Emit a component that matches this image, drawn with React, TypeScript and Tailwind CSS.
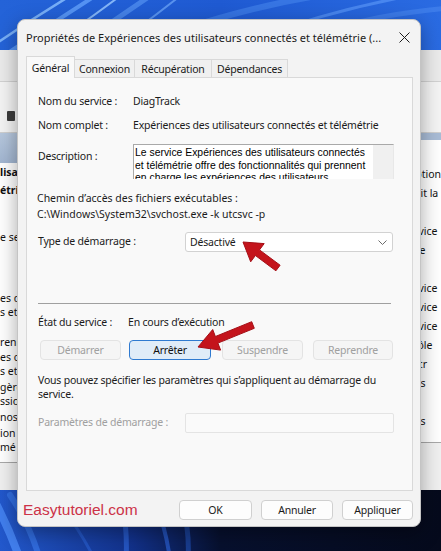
import React from 'react';

function Wallpaper() {
  return (
    <svg className="absolute inset-0" width="441" height="551" viewBox="0 0 441 551">
      <defs>
        <linearGradient id="topg" x1="0" y1="0" x2="1" y2="0">
          <stop offset="0" stopColor="#2463d8" />
          <stop offset="0.5" stopColor="#1f5ad2" />
          <stop offset="1" stopColor="#2a6be2" />
        </linearGradient>
        <linearGradient id="botg" x1="0" y1="0" x2="1" y2="0">
          <stop offset="0" stopColor="#2258cc" />
          <stop offset="0.3" stopColor="#12318a" />
          <stop offset="0.5" stopColor="#07102e" />
          <stop offset="1" stopColor="#050a1c" />
        </linearGradient>
      </defs>
      <rect x="0" y="0" width="441" height="70" fill="url(#topg)" />
      <rect x="0" y="470" width="441" height="81" fill="url(#botg)" />
      <g fill="none" strokeLinecap="round">
        <path d="M-10 48 Q30 20 70 -4" stroke="#8cc2ff" strokeWidth="2.5" opacity="0.8" />
        <path d="M5 55 Q45 28 95 -4" stroke="#6aa8ff" strokeWidth="4" opacity="0.7" />
        <path d="M30 58 Q75 30 120 -4" stroke="#9ccbff" strokeWidth="2" opacity="0.8" />
        <path d="M60 58 Q100 30 150 -4" stroke="#5e9bf5" strokeWidth="5" opacity="0.6" />
        <path d="M95 58 Q140 28 180 -4" stroke="#7fb6ff" strokeWidth="2" opacity="0.6" />
        <path d="M180 30 Q260 4 330 -6" stroke="#4c8bf0" strokeWidth="6" opacity="0.5" />
        <path d="M250 40 Q330 10 420 -6" stroke="#6aa6ff" strokeWidth="3" opacity="0.5" />
        <path d="M330 30 Q380 14 450 8" stroke="#4d8cf2" strokeWidth="5" opacity="0.5" />
        <path d="M-6 500 Q10 530 20 560" stroke="#4a88f5" strokeWidth="8" opacity="0.8" />
        <path d="M10 495 Q30 525 40 560" stroke="#3572e4" strokeWidth="6" opacity="0.8" />
        <path d="M120 495 Q128 525 126 560" stroke="#2c62d6" strokeWidth="5" opacity="0.7" />
        <path d="M150 495 Q165 520 170 560" stroke="#2a5ed0" strokeWidth="4" opacity="0.7" />
        <path d="M180 500 Q190 525 188 560" stroke="#1e4aa8" strokeWidth="5" opacity="0.7" />
        <path d="M60 505 Q80 530 95 560" stroke="#2a60d4" strokeWidth="3" opacity="0.6" />
      </g>
    </svg>
  );
}

function ServicesWindow() {
  const right = ['cription', 'urnit la', 'exe', 'service', 'ce le', 'ave', 'service', 'service', 'service', 'ntrôle', 'metr', 'e les', '', 'e les'];
  return (
    <div className="absolute left-0 top-[50px] w-[441px] h-[440px] bg-white flex flex-col font-['Noto_Sans',sans-serif] text-[10.5px] text-[#111]">
      <div className="h-[32px] bg-[#ebebeb] border-b border-[#d2d2d2]" />
      <div className="h-[51px] bg-[#f4f4f4] border-b border-[#cfcfcf] pl-[7px] pt-[29px]">
        <div className="w-[8px] h-[10px] rounded-[1px] bg-[#3c3c3c]" />
      </div>
      <div className="flex flex-1">
        <div className="w-[421px] flex flex-col">
          <div className="h-[30px] bg-gradient-to-b from-[#b7c8de] to-[#a2b6d1]" />
          <div className="flex-1 flex flex-col leading-[14px] whitespace-nowrap overflow-hidden">
            <div className="h-[14px] mt-[2px] font-bold">lisateurs</div>
            <div className="h-[14px] mt-[4px] font-bold">étrie</div>
            <div className="h-[14px] mt-[33px]">e service</div>
            <div className="h-[14px] mt-[47px]">es de</div>
            <div className="h-[14px]">s et</div>
            <div className="h-[14px] mt-[16px]">rennent</div>
            <div className="h-[14px] mt-[1px]">es con</div>
            <div className="h-[14px]">s et</div>
            <div className="h-[14px] mt-[2px]">gère</div>
            <div className="h-[14px]">ssion</div>
            <div className="h-[14px] mt-[2px]">nostic</div>
            <div className="h-[14px] mt-[2px]">ion</div>
            <div className="h-[14px]">mé</div>
          </div>
          <div className="h-[28px] bg-[#f0f0f0] border-t border-[#a8a8a8]" />
        </div>
        <div className="flex-1 flex flex-col">
          <div className="h-[7px] bg-[#a9bcd6]" />
          <div className="flex-1 flex flex-col pt-[25px] whitespace-nowrap overflow-hidden">
            {right.map((t, i) => (
              <div key={i} className="h-[19px] leading-[19px]">
                {t}
              </div>
            ))}
          </div>
          <div className="h-[48px] bg-[#f0f0f0] border-t border-[#a8a8a8]" />
        </div>
      </div>
    </div>
  );
}

function Arrows() {
  return (
    <svg className="absolute inset-0 pointer-events-none" width="441" height="551" viewBox="0 0 441 551">
      <g fill="#c4141c" stroke="#a50f16" strokeWidth="1" strokeLinejoin="round">
        <polygon points="280.1,265.2 259.5,249.9 264.2,243.6 243,242 250.7,261.8 255.4,255.5 275.9,270.8" />
        <polygon points="251.7,321.7 215.4,336.5 212.7,329.5 198,347 220.6,350.1 217.9,343.1 254.3,328.3" />
      </g>
    </svg>
  );
}

function Tab({ label, active, w }: { label: string; active?: boolean; w: string }) {
  return active ? (
    <div className={`${w} h-[22px] bg-[#f9f9f9] border border-b-0 border-[#d9d9d9] flex items-center justify-center -mb-px relative z-10`}>
      {label}
    </div>
  ) : (
    <div className={`${w} h-[18px] bg-[#f0f0f0] border-t border-r border-[#d9d9d9] flex items-center justify-center`}>
      {label}
    </div>
  );
}

function SmallButton({ label, w, disabled, focused }: { label: string; w: string; disabled?: boolean; focused?: boolean }) {
  let cls = 'bg-[#fdfdfd] border-[#d0d0d0] text-[#1b1b1b]';
  if (disabled) cls = 'bg-[#f5f5f5] border-[#e3e3e3] text-[#a0a0a0]';
  if (focused) cls = 'bg-[#e0ecf8] border-[#2f7ad0] text-[#111]';
  return (
    <div className={`${w} h-[20px] rounded-[4px] border ${cls} flex items-center justify-center`}>
      {label}
    </div>
  );
}

function Dialog() {
  return (
    <div className="absolute left-[17px] top-[19px] w-[404px] h-[508px] rounded-[8px] bg-[#f3f3f3] border border-[#c4c4c4] shadow-[0_6px_20px_rgba(0,0,0,0.35)] flex flex-col font-['Noto_Sans',sans-serif] text-[10.5px] tracking-[-0.2px] text-[#1b1b1b] leading-[16px]">
      <div className="h-[35px] flex items-center pl-[8px] pr-[10px]">
        <div className="text-[11px] tracking-normal whitespace-nowrap">
          Propriétés de Expériences des utilisateurs connectés et télémétrie (...
        </div>
        <svg width="11" height="11" viewBox="0 0 11 11" className="ml-auto">
          <path d="M0.5 0.5 L10.5 10.5 M10.5 0.5 L0.5 10.5" stroke="#1b1b1b" strokeWidth="1" />
        </svg>
      </div>
      <div className="flex items-end h-[22px] pl-[8px]">
        <Tab label="Général" active w="w-[49px]" />
        <Tab label="Connexion" w="w-[60px]" />
        <Tab label="Récupération" w="w-[77px]" />
        <Tab label="Dépendances" w="w-[76px]" />
      </div>
      <div className="ml-[8px] w-[387px] h-[414px] border border-[#d9d9d9] bg-[#f9f9f9] pt-[15px] pl-[11px] flex flex-col">
        <div className="flex h-[16px]">
          <div className="w-[95px]">Nom du service :</div>
          <div>DiagTrack</div>
        </div>
        <div className="flex h-[16px] mt-[8px]">
          <div className="w-[95px]">Nom complet :</div>
          <div>Expériences des utilisateurs connectés et télémétrie</div>
        </div>
        <div className="flex mt-[11px] h-[35px]">
          <div className="w-[95px] pt-[4px]">Description :</div>
          <div className="w-[261px] h-[35px] flex border-t border-l border-[#a9a9a9] border-r border-r-[#e8e8e8] bg-white overflow-hidden">
            <div className="flex-1 pl-[1px] pt-[2px] font-['Liberation_Sans',sans-serif] text-[10.4px] tracking-normal leading-[12.5px] text-black">
              Le service Expériences des utilisateurs connectés et télémétrie offre des fonctionnalités qui prennent en charge les expériences des utilisateurs
            </div>
            <div className="w-[20px] bg-[#f0f0f0]" />
          </div>
        </div>
        <div className="h-[16px] mt-[11px] -ml-px tracking-normal">Chemin d’accès des fichiers exécutables :</div>
        <div className="h-[16px] -ml-px tracking-normal">C:\Windows\System32\svchost.exe -k utcsvc -p</div>
        <div className="flex items-center mt-[10px] h-[20px]">
          <div className="w-[147px] -mt-[2px]">Type de démarrage :</div>
          <div className="w-[208px] h-[20px] bg-white border border-[#d2d2d2] rounded-[3px] flex items-center pl-[4px] pr-[5px]">
            <div className="flex-1">Désactivé</div>
            <svg width="9" height="5" viewBox="0 0 9 5">
              <path d="M0.5 0.5 L4.5 4.5 L8.5 0.5" stroke="#6b6b6b" strokeWidth="1" fill="none" />
            </svg>
          </div>
        </div>
        <div className="mt-[51px] w-[353px] h-px bg-[#a0a0a0]" />
        <div className="flex h-[16px] mt-[10px]">
          <div className="w-[90px]">État du service :</div>
          <div>En cours d’exécution</div>
        </div>
        <div className="flex mt-[10px] ml-[2px]">
          <SmallButton label="Démarrer" w="w-[81px]" disabled />
          <div className="ml-[8px]">
            <SmallButton label="Arrêter" w="w-[82px]" focused />
          </div>
          <div className="ml-[11px]">
            <SmallButton label="Suspendre" w="w-[81px]" disabled />
          </div>
          <div className="ml-[10px]">
            <SmallButton label="Reprendre" w="w-[80px]" disabled />
          </div>
        </div>
        <div className="mt-[13px] leading-[14px] w-[360px]">
          Vous pouvez spécifier les paramètres qui s’appliquent au démarrage du service.
        </div>
        <div className="flex items-center mt-[12px] h-[20px]">
          <div className="w-[147px] -mt-[2px] text-[#a0a0a0]">Paramètres de démarrage :</div>
          <div className="w-[209px] h-[20px] bg-[#fafafa] border border-[#e4e4e4] rounded-[2px]" />
        </div>
      </div>
      <div className="flex items-start pt-[9px] pl-[5px] pr-[7px]">
        <div className="font-['Liberation_Sans',sans-serif] text-[15.5px] tracking-normal leading-[20px] text-[#cc3247]">Easytutoriel.com</div>
        <div className="ml-auto flex gap-[9px]">
          <SmallButton label="OK" w="w-[73px]" />
          <SmallButton label="Annuler" w="w-[72px]" />
          <SmallButton label="Appliquer" w="w-[71px]" />
        </div>
      </div>
    </div>
  );
}

export default function App() {
  return (
    <div className="relative w-[441px] h-[551px] overflow-hidden bg-[#081434]">
      <Wallpaper />
      <ServicesWindow />
      <Dialog />
      <Arrows />
    </div>
  );
}
